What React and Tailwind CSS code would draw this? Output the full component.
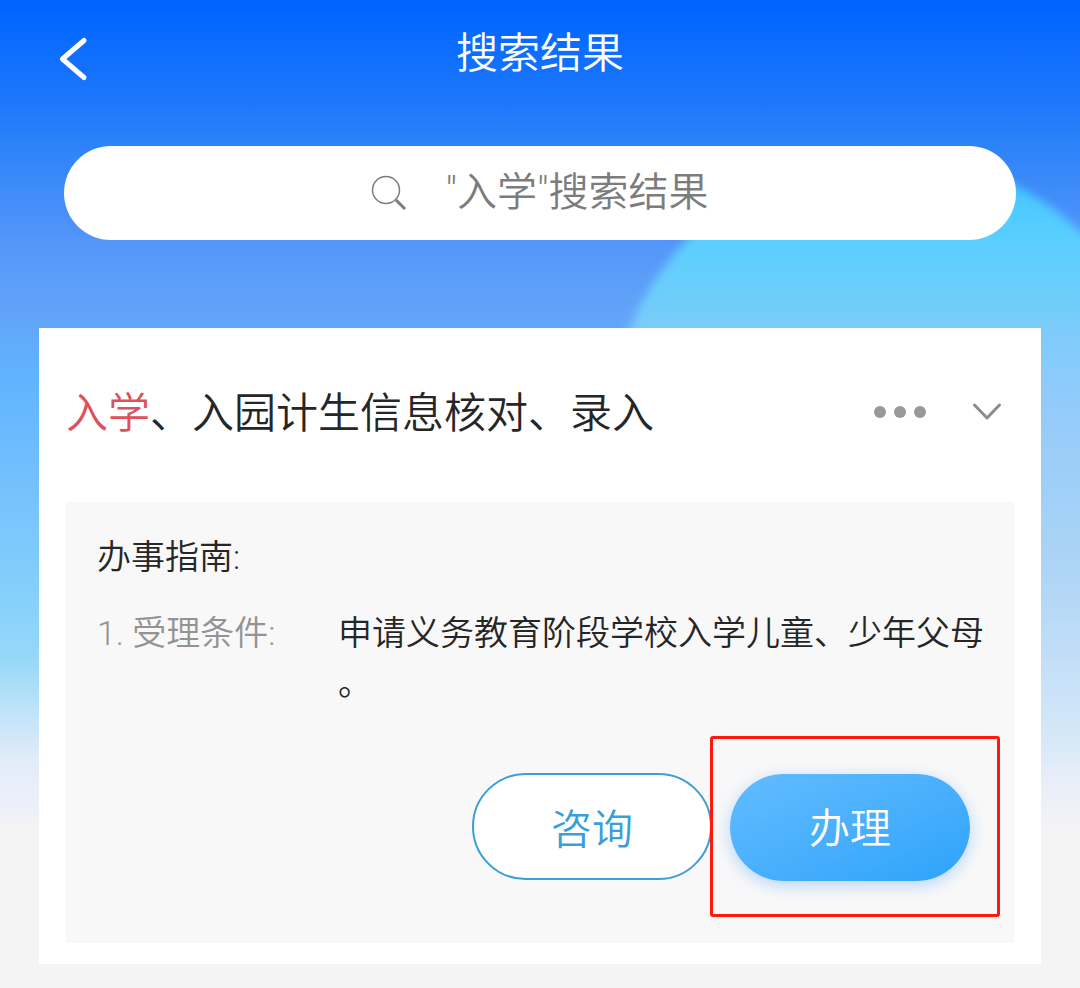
import { useState } from 'react'

const conditions = [
  { label: '受理条件:', text: '申请义务教育阶段学校入学儿童、少年父母。' },
]

function Backdrop() {
  return (
    <div className="absolute inset-0 -z-10 overflow-hidden bg-[#f4f4f4]">
      <div className="h-[830px] bg-[linear-gradient(to_bottom,#0062ff_0px,#0a6bff_40px,#2179fb_110px,#2f84f8_150px,#5395fa_240px,#62a3f7_310px,#60b4ff_380px,#74c0fd_480px,#86d0fa_600px,#97d8f8_660px,#c5e5f9_720px,#e3ebf8_760px,#ebeffb_800px,#f4f4f4_830px)]" />
      <svg className="absolute inset-0 h-[830px] w-full" preserveAspectRatio="none" viewBox="0 0 1080 830" aria-hidden="true">
        <defs>
          <linearGradient id="glow" gradientUnits="userSpaceOnUse" x1="0" y1="147" x2="0" y2="830">
            <stop offset="0" stopColor="#34c2ff" />
            <stop offset="0.14" stopColor="#5bcfff" />
            <stop offset="0.23" stopColor="#70cdf8" />
            <stop offset="0.28" stopColor="#80cbfb" />
            <stop offset="0.4" stopColor="#96cbf9" />
            <stop offset="0.6" stopColor="#aad3f6" />
            <stop offset="0.86" stopColor="#d5e7f8" />
            <stop offset="0.93" stopColor="#e9eef9" />
            <stop offset="1" stopColor="#f4f4f4" />
          </linearGradient>
          <filter id="soft">
            <feGaussianBlur stdDeviation="5" />
          </filter>
        </defs>
        <path d="M610 860V430a278 275 0 0 1 556 0V860z" fill="url(#glow)" filter="url(#soft)" />
      </svg>
    </div>
  )
}

export default function App() {
  const [query, setQuery] = useState('"入学"搜索结果')
  const [open, setOpen] = useState(true)

  return (
    <div className="relative isolate min-h-screen pb-6 font-[Roboto,'Noto_Sans_CJK_SC',sans-serif] font-[350] text-[#262626]">
      <Backdrop />

      <header className="grid grid-cols-[1fr_auto_1fr] items-center px-14 pt-6">
        <button type="button" aria-label="返回" className="mt-2 justify-self-start text-white">
          <svg className="h-12 w-9" viewBox="0 0 36 48" fill="none" stroke="currentColor" strokeWidth="5" strokeLinecap="round" strokeLinejoin="round">
            <path d="M28 6.500L6.500 25L28 43.500" />
          </svg>
        </button>
        <h1 className="text-[42px] leading-[60px] text-white">搜索结果</h1>
      </header>

      <label className="mx-16 mt-[62px] flex h-[94px] items-center justify-center gap-[38px] rounded-full bg-white text-[#7c7c7c]">
        <svg className="size-9 shrink-0" viewBox="0 0 36 36" fill="none" stroke="currentColor" aria-hidden="true">
          <circle cx="15" cy="15" r="13.500" strokeWidth="1.500" />
          <path d="M25 25L34 34" strokeWidth="3" />
        </svg>
        <input
          type="text"
          aria-label="搜索"
          value={query}
          onChange={(e) => setQuery(e.target.value)}
          className="field-sizing-content text-[40px] leading-[60px] outline-none"
        />
      </label>

      <main className="mx-[39px] mt-[88px] bg-white px-[27px] pt-14 pb-[21px]">
        <div className="flex items-center">
          <h2 className="flex-1 text-[42px] leading-[60px]">
            <span className="text-[#e0505a]">入学</span>、入园计生信息核对、录入
          </h2>
          <button type="button" aria-label="更多" className="text-[#999]">
            <svg className="h-8 w-14" viewBox="0 0 56 32" fill="currentColor">
              <circle cx="8" cy="14" r="6" />
              <circle cx="28" cy="14" r="6" />
              <circle cx="48" cy="14" r="6" />
            </svg>
          </button>
          <button type="button" aria-label="展开" aria-expanded={open} onClick={() => setOpen(!open)} className="mr-[11px] ml-[43px] text-[#8c8c8c]">
            <svg className="h-8 w-8" viewBox="0 0 32 32" fill="none" stroke="currentColor" strokeWidth="3" strokeLinecap="round" strokeLinejoin="round">
              <path d="M3.500 7L16 20L28.500 7" />
            </svg>
          </button>
        </div>

        {open && (
          <section className="mt-[58px] bg-[#f8f8f8] pt-[30px] pr-[14px] pb-[26px] pl-[31px]">
            <div className="pr-3 text-[34px] leading-[50px]">
              <h3>办事指南:</h3>
              <ol className="mt-[26px]">
                {conditions.map((c, i) => (
                  <li key={c.label} className="flex">
                    <span className="w-[241px] shrink-0 text-[#939393]">{i + 1}. {c.label}</span>
                    <p className="min-w-0 flex-1 [line-break:anywhere]">{c.text}</p>
                  </li>
                ))}
              </ol>
            </div>

            <div className="mt-7 flex items-center justify-end">
              <button type="button" className="h-[107px] w-[240px] rounded-full border-2 border-[#3a9fd8] bg-white pt-2 text-[41px] text-[#3a9fd8]">
                咨询
              </button>
              <div className="-ml-[2px] rounded-[3px] border-[3px] border-[#ff1a0d] pt-[35px] pr-[27px] pb-[33px] pl-[17px]">
                <button type="button" className="h-[107px] w-[240px] rounded-full bg-linear-to-br from-[#62bcff] to-[#2ba3fa] pt-1 text-[41px] text-white shadow-[0_4px_16px_rgba(80,160,255,0.4)]">
                  办理
                </button>
              </div>
            </div>
          </section>
        )}
      </main>
    </div>
  )
}
